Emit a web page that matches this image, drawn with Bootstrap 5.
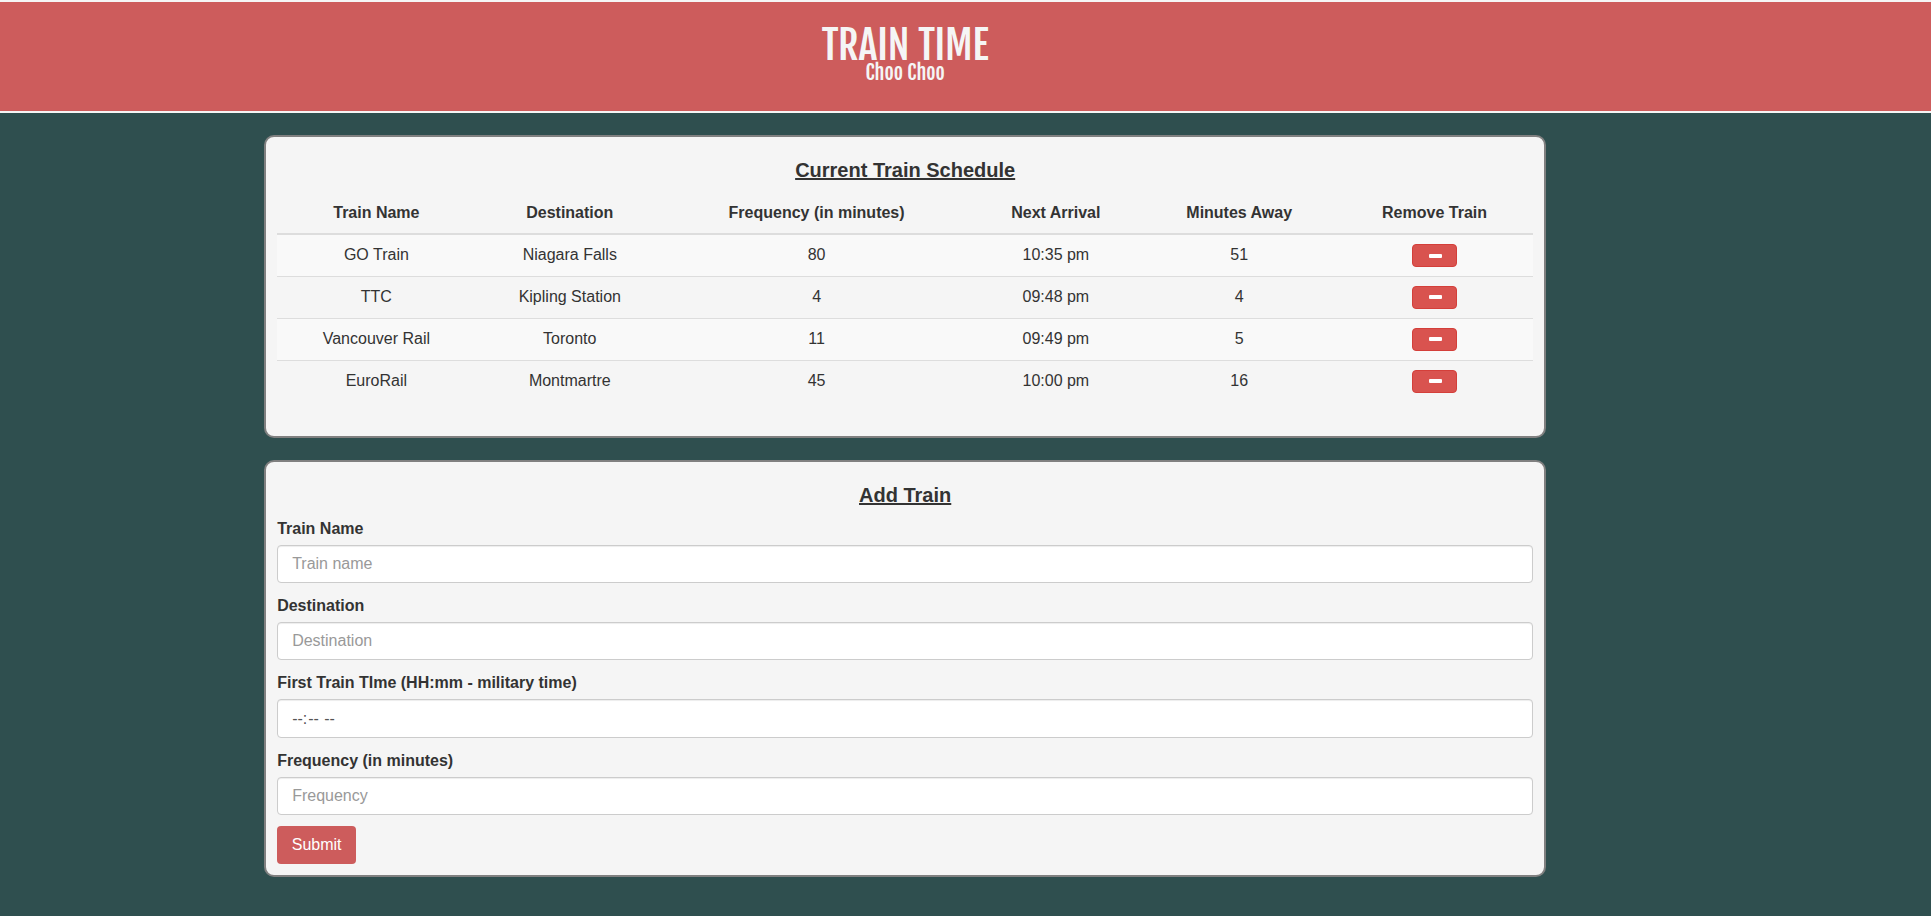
<!DOCTYPE html>
<html lang="en">
<head>
<meta charset="utf-8">
<meta name="viewport" content="width=device-width, initial-scale=1">
<title>Train Time</title>
<link href="https://cdn.jsdelivr.net/npm/bootstrap@5.3.0/dist/css/bootstrap.min.css" rel="stylesheet">
<style>
  body {
    background: #2f4f4f;
    color: #333;
    font-family: "Liberation Sans", Arial, sans-serif;
    font-size: 16px;
    line-height: 23px;
  }
  .page-gutter { padding-right: 6.25%; }
  .masthead {
    background: #cd5c5c;
    border-top: 2px solid #f5f5f5;
    border-bottom: 2px solid #f5f5f5;
    color: #f5f5f5;
    font-family: "Fjalla One", "Liberation Sans Narrow", "Liberation Sans", sans-serif;
    padding-top: 24px;
    padding-bottom: 29px;
    margin-bottom: 22px;
  }
  .masthead h1 { font-size: 40px; line-height: 38px; font-weight: 400; }
  .masthead p { font-size: 20px; line-height: 18px; font-weight: 400; }
  .content-wrap { width: 71%; max-width: 1282px; }
  .panel-box {
    background: #f5f5f5;
    border: 2px solid #808080;
    border-radius: 10px;
    padding: 11px;
    margin-bottom: 22px;
  }
  .panel-box h2 {
    font-size: 20px;
    line-height: 22px;
    font-weight: 700;
    margin: 11px 0;
    text-decoration: underline;
  }
  .schedule { --bs-table-bg: transparent; color: #333; margin: 12px 0 23px; }
  .schedule th, .schedule td { padding: 8px; border: 0; }
  .schedule thead th { border-bottom: 2px solid #ddd; padding-bottom: 9px; }
  .schedule tbody tr + tr td { border-top: 1px solid #ddd; }
  .schedule tbody td { height: 42px; color: #333; }
  .schedule tbody tr:nth-child(odd) td { background: #f9f9f9; }
  .schedule .col-a { width: 15.8%; }
  .schedule .col-b { width: 15%; }
  .schedule .col-c { width: 24.3%; }
  .schedule .col-d { width: 13.8%; }
  .schedule .col-e { width: 15.4%; }
  .schedule .col-f { width: 15.7%; }
  .btn-remove {
    display: inline-flex;
    align-items: center;
    justify-content: center;
    width: 45px;
    height: 23px;
    padding: 0 0 0 1px;
    background: #d9534f;
    border: 1px solid #d43f3a;
    border-radius: 4px;
    vertical-align: top;
    margin-top: 1px;
  }
  .form-group { margin-bottom: 11px; }
  .form-group label { display: block; font-weight: 700; margin-bottom: 5px; }
  .form-group .form-control {
    height: 38px;
    padding: 6px 14px;
    color: #555;
    font-size: 16px;
    line-height: 24px;
    border: 1px solid #ccc;
    border-radius: 4px;
    box-shadow: inset 0 1px 1px rgba(0,0,0,.075);
  }
  .form-group .form-control[type="time"] { height: 39px; }
  .form-control::placeholder { color: #999; }
  .form-control::-webkit-calendar-picker-indicator { display: none; }
  .btn-submit {
    height: 38px;
    min-width: 79px;
    padding: 0 14px 2px;
    background: #cd5c5c;
    color: #fff;
    border: 0;
    border-radius: 4px;
  }
</style>
</head>
<body>
<header class="masthead">
  <div class="page-gutter text-center">
    <h1 class="m-0">TRAIN TIME</h1>
    <p class="m-0">Choo Choo</p>
  </div>
</header>
<main class="page-gutter">
  <div class="content-wrap mx-auto">
    <section class="panel-box">
      <h2 class="text-center">Current Train Schedule</h2>
      <table class="table schedule text-center align-top">
        <colgroup><col class="col-a"><col class="col-b"><col class="col-c"><col class="col-d"><col class="col-e"><col class="col-f"></colgroup>
        <thead>
          <tr><th scope="col">Train Name</th><th scope="col">Destination</th><th scope="col">Frequency (in minutes)</th><th scope="col">Next Arrival</th><th scope="col">Minutes Away</th><th scope="col">Remove Train</th></tr>
        </thead>
        <tbody>
          <tr><td>GO Train</td><td>Niagara Falls</td><td>80</td><td>10:35 pm</td><td>51</td><td><button type="button" class="btn-remove" aria-label="Remove GO Train"><svg width="13" height="4" aria-hidden="true"><rect width="13" height="4" rx="1" fill="#fff"/></svg></button></td></tr>
          <tr><td>TTC</td><td>Kipling Station</td><td>4</td><td>09:48 pm</td><td>4</td><td><button type="button" class="btn-remove" aria-label="Remove TTC"><svg width="13" height="4" aria-hidden="true"><rect width="13" height="4" rx="1" fill="#fff"/></svg></button></td></tr>
          <tr><td>Vancouver Rail</td><td>Toronto</td><td>11</td><td>09:49 pm</td><td>5</td><td><button type="button" class="btn-remove" aria-label="Remove Vancouver Rail"><svg width="13" height="4" aria-hidden="true"><rect width="13" height="4" rx="1" fill="#fff"/></svg></button></td></tr>
          <tr><td>EuroRail</td><td>Montmartre</td><td>45</td><td>10:00 pm</td><td>16</td><td><button type="button" class="btn-remove" aria-label="Remove EuroRail"><svg width="13" height="4" aria-hidden="true"><rect width="13" height="4" rx="1" fill="#fff"/></svg></button></td></tr>
        </tbody>
      </table>
    </section>
    <section class="panel-box">
      <h2 class="text-center">Add Train</h2>
      <form>
        <div class="form-group"><label for="train-name">Train Name</label><input class="form-control" type="text" id="train-name" placeholder="Train name"></div>
        <div class="form-group"><label for="destination">Destination</label><input class="form-control" type="text" id="destination" placeholder="Destination"></div>
        <div class="form-group"><label for="first-time">First Train TIme (HH:mm - military time)</label><input class="form-control" type="time" id="first-time"></div>
        <div class="form-group"><label for="frequency">Frequency (in minutes)</label><input class="form-control" type="text" id="frequency" placeholder="Frequency"></div>
        <button type="submit" class="btn-submit d-block">Submit</button>
      </form>
    </section>
  </div>
</main>
<script src="https://cdn.jsdelivr.net/npm/bootstrap@5.3.0/dist/js/bootstrap.bundle.min.js"></script>
</body>
</html>
